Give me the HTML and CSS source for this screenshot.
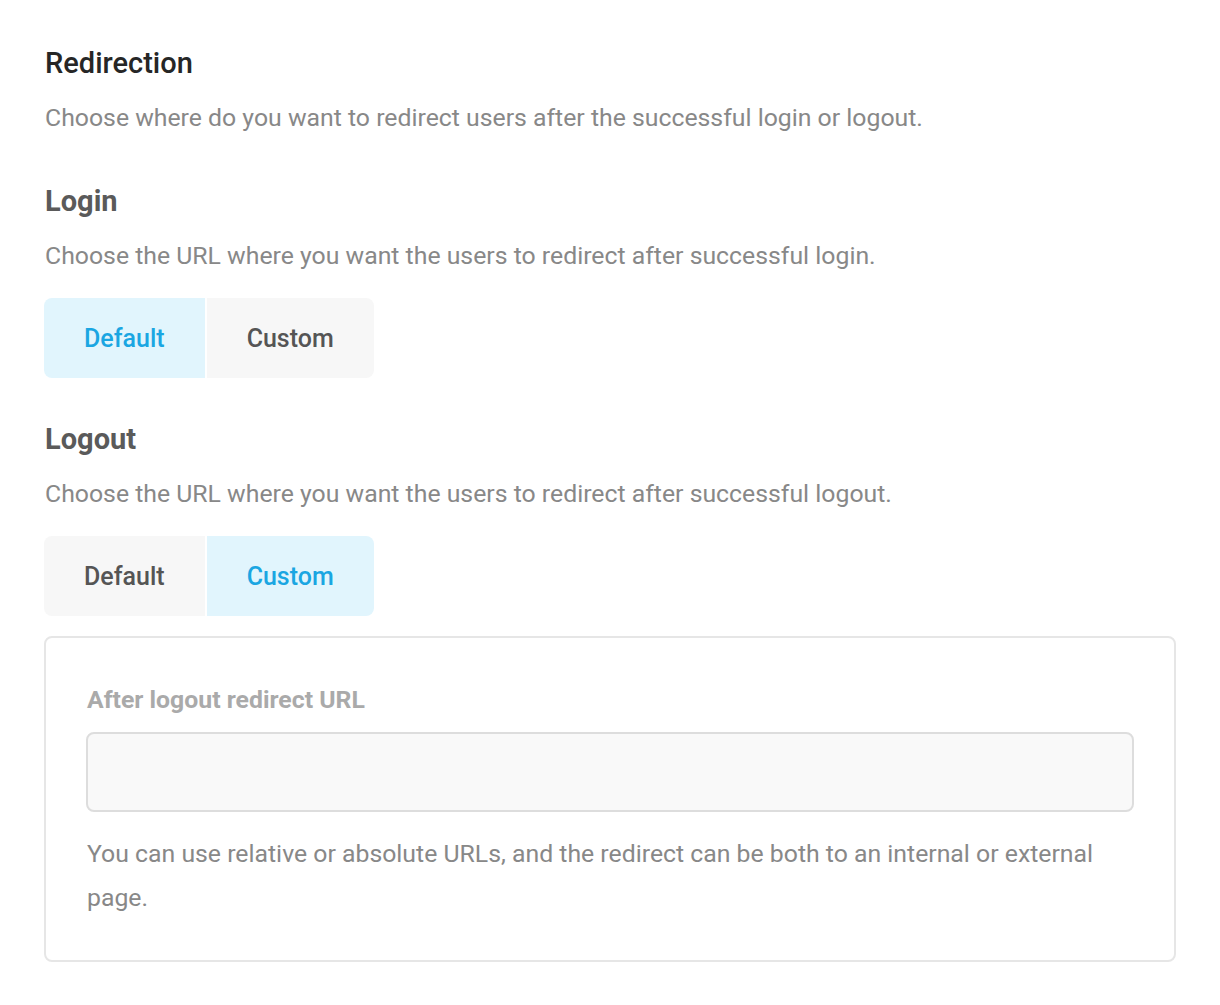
FILE: index.html
```html
<!DOCTYPE html>
<html>
<head>
<meta charset="utf-8">
<link rel="stylesheet" href="styles.css">
</head>
<body>
<div class="page">
  <section class="section intro">
    <h2 class="title">Redirection</h2>
    <p class="desc">Choose where do you want to redirect users after the successful login or logout.</p>
  </section>
  <section class="section">
    <h3 class="subtitle">Login</h3>
    <p class="desc">Choose the URL where you want the users to redirect after successful login.</p>
    <div class="toggle">
      <button class="opt active">Default</button>
      <button class="opt">Custom</button>
    </div>
  </section>
  <section class="section">
    <h3 class="subtitle">Logout</h3>
    <p class="desc">Choose the URL where you want the users to redirect after successful logout.</p>
    <div class="toggle">
      <button class="opt">Default</button>
      <button class="opt active">Custom</button>
    </div>
  </section>
  <div class="card">
    <label class="label">After logout redirect URL</label>
    <div class="input"></div>
    <p class="help">You can use relative or absolute URLs, and the redirect can be both to an internal or external page.</p>
  </div>
</div>
</body>
</html>
```
FILE: styles.css
```css
* { box-sizing: border-box; }
body {
  margin: 0;
  background: #fff;
  font-family: Roboto, "Liberation Sans", sans-serif;
}
.page {
  padding: 43px 44px 0 44px;
}
.title {
  margin: 0;
  font-size: 29px;
  font-weight: 500;
  color: #262626;
  line-height: 40px;
  padding-left: 1px;
}
.subtitle {
  margin: 0;
  font-size: 29px;
  font-weight: 700;
  color: #5a5a5a;
  line-height: 40px;
  padding-left: 1px;
}
.desc {
  margin: 19px 0 0 0;
  font-size: 24.8px;
  color: #888;
  line-height: 32px;
  padding-left: 1px;
}
.section { margin-bottom: 41px; }
.section.intro { margin-bottom: 47px; }
.toggle {
  display: flex;
  gap: 2px;
  margin-top: 26px;
}
.opt {
  height: 80px;
  border: 0;
  background: #f7f7f7;
  color: #555;
  font-family: Roboto, "Liberation Sans", sans-serif;
  font-size: 25px;
  font-weight: 500;
  padding: 0 40px;
}
.opt:first-child { border-radius: 8px 0 0 8px; }
.opt:last-child { border-radius: 0 8px 8px 0; }
.opt.active { background: #e1f5fd; color: #1aa6e2; }
.card {
  border: 2px solid #e6e6e6;
  border-radius: 8px;
  padding: 46px 40px 40px 40px;
  margin-top: -21px;
}
.label {
  display: block;
  font-size: 24.8px;
  font-weight: 700;
  color: #aaa;
  line-height: 32px;
  padding-left: 1px;
}
.input {
  margin-top: 16px;
  height: 80px;
  background: #f9f9f9;
  border: 2px solid #ddd;
  border-radius: 8px;
}
.help {
  margin: 20px 0 0 0;
  font-size: 24.8px;
  line-height: 44px;
  color: #888;
  padding-left: 1px;
}
```
